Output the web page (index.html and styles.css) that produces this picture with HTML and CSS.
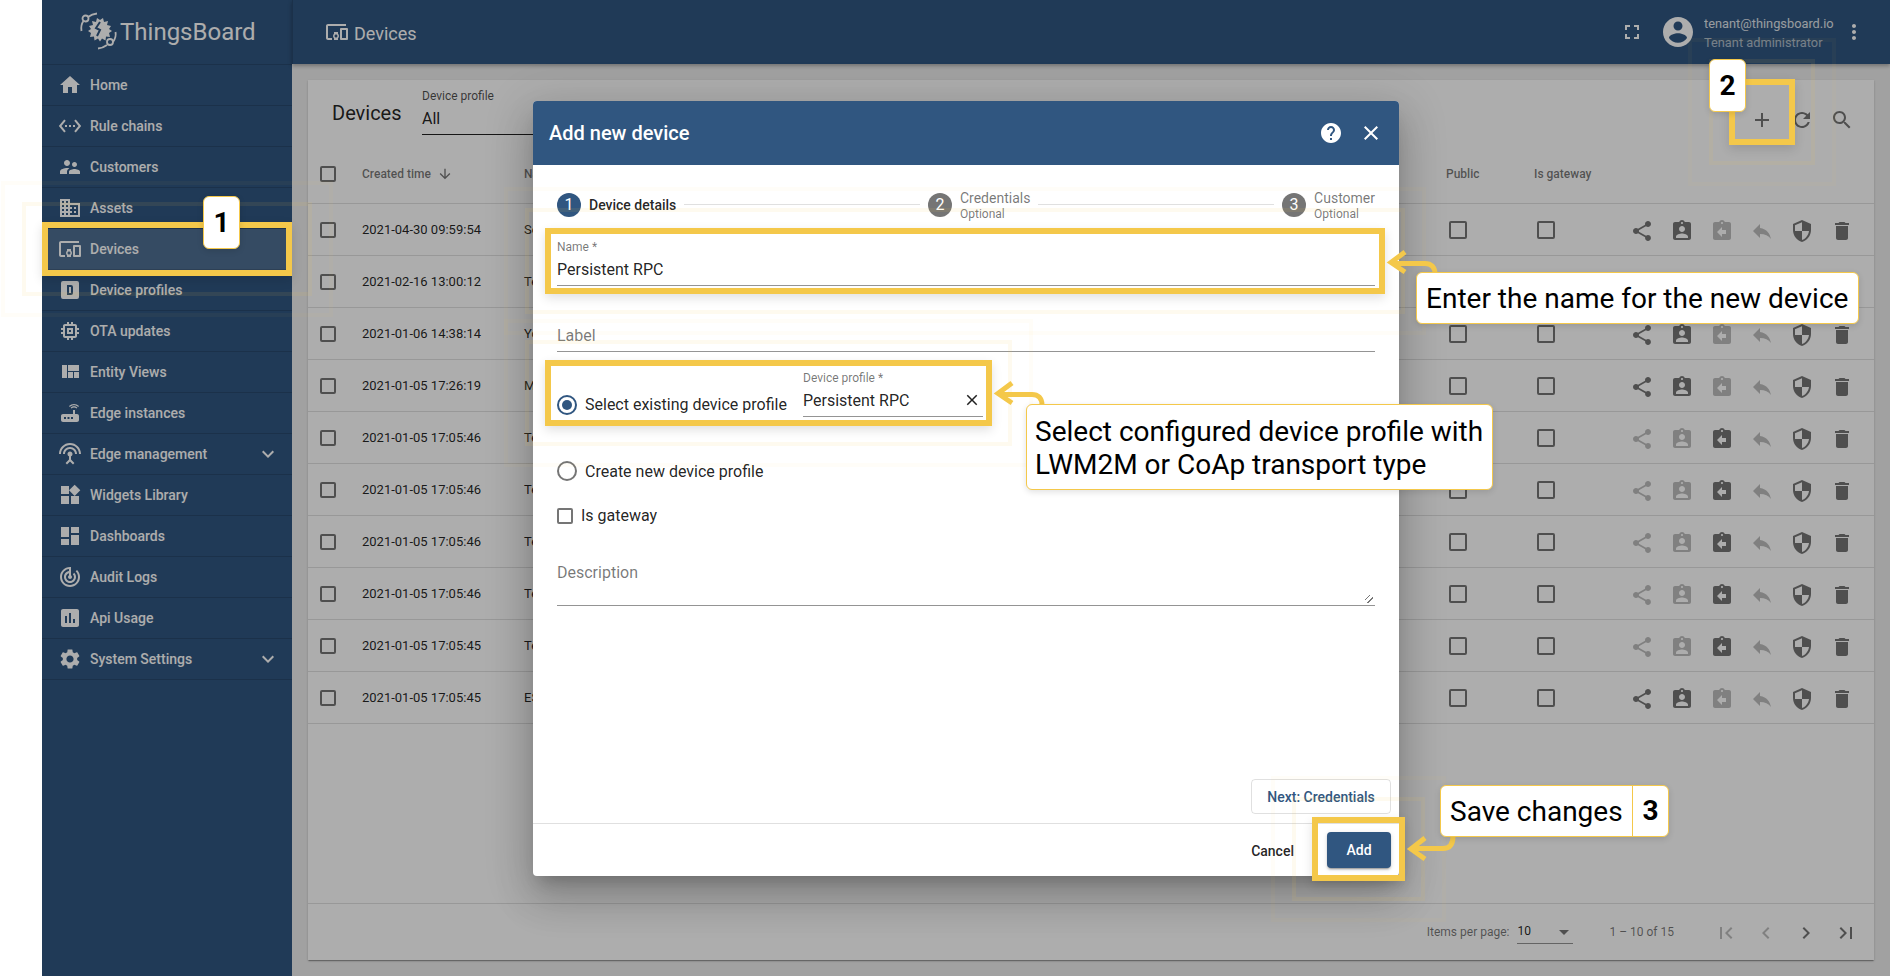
FILE: index.html
```html
<!DOCTYPE html>
<html lang="en">
<head>
<meta charset="utf-8">
<title>ThingsBoard | Devices</title>
<link rel="stylesheet" href="styles.css">
</head>
<body>
<svg class="defs" aria-hidden="true">
  <symbol id="home" viewBox="0 0 24 24"><path d="M10 20v-6h4v6h5v-8h3L12 3 2 12h3v8z"/></symbol>
  <symbol id="rule" viewBox="0 0 24 24"><path d="M7.77 6.76L6.23 5.48.82 12l5.41 6.52 1.54-1.28L3.42 12l4.35-5.24zM7 13h2v-2H7v2zm10-2h-2v2h2v-2zm-6 2h2v-2h-2v2zm6.77-7.52l-1.54 1.28L20.58 12l-4.35 5.24 1.54 1.28L23.18 12l-5.41-6.52z"/></symbol>
  <symbol id="customers" viewBox="0 0 24 24"><path d="M16.5 12c1.38 0 2.49-1.12 2.49-2.5S17.88 7 16.5 7C15.12 7 14 8.12 14 9.5s1.12 2.5 2.5 2.5zM9 11c1.66 0 2.99-1.34 2.99-3S10.66 5 9 5C7.34 5 6 6.34 6 8s1.34 3 3 3zm7.5 3c-1.83 0-5.5.92-5.5 2.75V19h11v-2.25c0-1.83-3.67-2.75-5.5-2.75zM9 13c-2.33 0-7 1.17-7 3.5V19h7v-2.25c0-.85.33-2.34 2.37-3.47C10.5 13.1 9.66 13 9 13z"/></symbol>
  <symbol id="assets" viewBox="0 0 24 24"><path d="M12 7V3H2v18h20V7H12zM6 19H4v-2h2v2zm0-4H4v-2h2v2zm0-4H4V9h2v2zm0-4H4V5h2v2zm4 12H8v-2h2v2zm0-4H8v-2h2v2zm0-4H8V9h2v2zm0-4H8V5h2v2zm10 12h-8v-2h2v-2h-2v-2h2v-2h-2V9h8v10zm-2-8h-2v2h2v-2zm0 4h-2v2h2v-2z"/></symbol>
  <symbol id="devices" viewBox="0 0 24 24"><path d="M3 6h18V4H3c-1.1 0-2 .9-2 2v12c0 1.1.9 2 2 2h4v-2H3V6zm10 6H9v1.78c-.61.55-1 1.33-1 2.22s.39 1.67 1 2.22V20h4v-1.78c.61-.55 1-1.34 1-2.22s-.39-1.67-1-2.22V12zm-2 5.5c-.83 0-1.5-.67-1.5-1.5s.67-1.5 1.5-1.5 1.5.67 1.5 1.5-.67 1.5-1.5 1.5zM22 8h-6c-.5 0-1 .5-1 1v10c0 .5.5 1 1 1h6c.5 0 1-.5 1-1V9c0-.5-.5-1-1-1zm-1 10h-4v-8h4v8z"/></symbol>
  <symbol id="profile" viewBox="0 0 24 24"><path fill-rule="evenodd" d="M5 3h14a2 2 0 0 1 2 2v14a2 2 0 0 1-2 2H5a2 2 0 0 1-2-2V5a2 2 0 0 1 2-2zm4 4v10h4a2 2 0 0 0 2-2V9a2 2 0 0 0-2-2H9zm2 2h2v6h-2V9z"/></symbol>
  <symbol id="memory" viewBox="0 0 24 24"><path d="M15 9H9v6h6V9zm-2 4h-2v-2h2v2zm8-2V9h-2V7c0-1.1-.9-2-2-2h-2V3h-2v2h-2V3H9v2H7c-1.1 0-2 .9-2 2v2H3v2h2v2H3v2h2v2c0 1.1.9 2 2 2h2v2h2v-2h2v2h2v-2h2c1.1 0 2-.9 2-2v-2h2v-2h-2v-2h2zm-4 6H7V7h10v10z"/></symbol>
  <symbol id="quilt" viewBox="0 0 24 24"><path d="M10 18h5v-6h-5v6zm-6 0h5V5H4v13zm12 0h5v-6h-5v6zM10 5v6h11V5H10z"/></symbol>
  <symbol id="router" viewBox="0 0 24 24"><path d="M20.2 5.9l.8-.8C19.6 3.7 17.8 3 16 3s-3.6.7-5 2.1l.8.8C13 4.8 14.5 4.2 16 4.2s3 .6 4.2 1.7zm-.9.8c-.9-.9-2.1-1.4-3.3-1.4s-2.4.5-3.3 1.4l.8.8c.7-.7 1.6-1 2.5-1 .9 0 1.8.3 2.5 1l.8-.8zM19 13h-2V9h-2v4H5c-1.1 0-2 .9-2 2v4c0 1.1.9 2 2 2h14c1.1 0 2-.9 2-2v-4c0-1.1-.9-2-2-2zM8 18H6v-2h2v2zm3.5 0h-2v-2h2v2zm3.5 0h-2v-2h2v2z"/></symbol>
  <symbol id="antenna" viewBox="0 0 24 24"><path d="M12 5c-3.87 0-7 3.13-7 7h2c0-2.76 2.24-5 5-5s5 2.24 5 5h2c0-3.87-3.13-7-7-7zm1 9.29c.88-.39 1.5-1.26 1.5-2.29 0-1.38-1.12-2.5-2.5-2.5S9.5 10.62 9.5 12c0 1.02.62 1.9 1.5 2.29v3.3L7.59 21 9 22.41l3-3 3 3L16.41 21 13 17.59v-3.3zM12 1C5.93 1 1 5.93 1 12h2c0-4.97 4.03-9 9-9s9 4.03 9 9h2c0-6.07-4.93-11-11-11z"/></symbol>
  <symbol id="widgets" viewBox="0 0 24 24"><path d="M13 13v8h8v-8h-8zM3 21h8v-8H3v8zM3 3v8h8V3H3zm13.66-1.31L11 7.34 16.66 13l5.66-5.66-5.66-5.65z"/></symbol>
  <symbol id="dash" viewBox="0 0 24 24"><path d="M3 13h8V3H3v10zm0 8h8v-6H3v6zm10 0h8V11h-8v10zm0-18v6h8V3h-8z"/></symbol>
  <symbol id="track" viewBox="0 0 24 24"><path d="M19.07 4.93l-1.41 1.41C19.1 7.79 20 9.79 20 12c0 4.42-3.58 8-8 8s-8-3.58-8-8c0-4.08 3.05-7.44 7-7.93v2.02C8.16 6.57 6 9.03 6 12c0 3.31 2.69 6 6 6s6-2.69 6-6c0-1.66-.67-3.16-1.76-4.24l-1.41 1.41C15.55 9.9 16 10.9 16 12c0 2.21-1.79 4-4 4s-4-1.79-4-4c0-1.86 1.28-3.41 3-3.86v2.14c-.6.35-1 .98-1 1.72 0 1.1.9 2 2 2s2-.9 2-2c0-.74-.4-1.38-1-1.72V2h-1C6.48 2 2 6.48 2 12s4.48 10 10 10 10-4.48 10-10c0-2.76-1.12-5.26-2.93-7.07z"/></symbol>
  <symbol id="chart" viewBox="0 0 24 24"><path d="M19 3H5c-1.1 0-2 .9-2 2v14c0 1.1.9 2 2 2h14c1.1 0 2-.9 2-2V5c0-1.1-.9-2-2-2zM9 17H7v-7h2v7zm4 0h-2V7h2v10zm4 0h-2v-4h2v4z"/></symbol>
  <symbol id="gear" viewBox="0 0 24 24"><path d="M19.14 12.94c.04-.3.06-.61.06-.94 0-.32-.02-.64-.07-.94l2.03-1.58c.18-.14.23-.41.12-.61l-1.92-3.32c-.12-.22-.37-.29-.59-.22l-2.39.96c-.5-.38-1.03-.7-1.62-.94l-.36-2.54c-.04-.24-.24-.41-.48-.41h-3.84c-.24 0-.43.17-.47.41l-.36 2.54c-.59.24-1.13.57-1.62.94l-2.39-.96c-.22-.08-.47 0-.59.22L2.74 8.87c-.12.21-.08.47.12.61l2.03 1.58c-.05.3-.09.63-.09.94s.02.64.07.94l-2.03 1.58c-.18.14-.23.41-.12.61l1.92 3.32c.12.22.37.29.59.22l2.39-.96c.5.38 1.03.7 1.62.94l.36 2.54c.05.24.24.41.48.41h3.84c.24 0 .44-.17.47-.41l.36-2.54c.59-.24 1.13-.56 1.62-.94l2.39.96c.22.08.47 0 .59-.22l1.92-3.32c.12-.22.07-.47-.12-.61l-2.01-1.58zM12 15.6c-1.98 0-3.6-1.62-3.6-3.6s1.62-3.6 3.6-3.6 3.6 1.62 3.6 3.6-1.62 3.6-3.6 3.6z"/></symbol>
  <symbol id="more" viewBox="0 0 24 24"><path d="M16.59 8.59L12 13.17 7.41 8.59 6 10l6 6 6-6z"/></symbol>
  <symbol id="full" viewBox="0 0 24 24"><path d="M7 14H5v5h5v-2H7v-3zm-2-4h2V7h3V5H5v5zm12 7h-3v2h5v-5h-2v3zM14 5v2h3v3h2V5h-5z"/></symbol>
  <symbol id="account" viewBox="0 0 24 24"><path d="M12 2C6.48 2 2 6.48 2 12s4.48 10 10 10 10-4.48 10-10S17.52 2 12 2zm0 3c1.66 0 3 1.34 3 3s-1.34 3-3 3-3-1.34-3-3 1.34-3 3-3zm0 14.2c-2.5 0-4.71-1.28-6-3.22.03-1.99 4-3.08 6-3.08 1.99 0 5.97 1.09 6 3.08-1.29 1.94-3.5 3.22-6 3.22z"/></symbol>
  <symbol id="vert" viewBox="0 0 24 24"><path d="M12 8c1.1 0 2-.9 2-2s-.9-2-2-2-2 .9-2 2 .9 2 2 2zm0 2c-1.1 0-2 .9-2 2s.9 2 2 2 2-.9 2-2-.9-2-2-2zm0 6c-1.1 0-2 .9-2 2s.9 2 2 2 2-.9 2-2-.9-2-2-2z"/></symbol>
  <symbol id="add" viewBox="0 0 24 24"><path d="M19 13h-6v6h-2v-6H5v-2h6V5h2v6h6v2z"/></symbol>
  <symbol id="refresh" viewBox="0 0 24 24"><path d="M17.65 6.35C16.2 4.9 14.21 4 12 4c-4.42 0-7.99 3.58-7.99 8s3.57 8 7.99 8c3.73 0 6.84-2.55 7.73-6h-2.08c-.82 2.33-3.04 4-5.65 4-3.31 0-6-2.69-6-6s2.69-6 6-6c1.66 0 3.14.69 4.22 1.78L13 11h7V4l-2.35 2.35z"/></symbol>
  <symbol id="search" viewBox="0 0 24 24"><path d="M15.5 14h-.79l-.28-.27C15.41 12.59 16 11.11 16 9.5 16 5.91 13.09 3 9.5 3S3 5.91 3 9.5 5.91 16 9.5 16c1.61 0 3.09-.59 4.23-1.57l.27.28v.79l5 4.99L20.49 19l-4.99-5zm-6 0C7.01 14 5 11.99 5 9.5S7.01 5 9.5 5 14 7.01 14 9.5 11.99 14 9.5 14z"/></symbol>
  <symbol id="share" viewBox="0 0 24 24"><path d="M18 16.08c-.76 0-1.44.3-1.96.77L8.91 12.7c.05-.23.09-.46.09-.7s-.04-.47-.09-.7l7.05-4.11c.54.5 1.25.81 2.04.81 1.66 0 3-1.34 3-3s-1.34-3-3-3-3 1.34-3 3c0 .24.04.47.09.7L8.04 9.81C7.5 9.31 6.79 9 6 9c-1.66 0-3 1.34-3 3s1.34 3 3 3c.79 0 1.5-.31 2.04-.81l7.12 4.16c-.05.21-.08.43-.08.65 0 1.61 1.31 2.92 2.92 2.92 1.61 0 2.92-1.31 2.92-2.92s-1.31-2.92-2.92-2.92z"/></symbol>
  <symbol id="assign" viewBox="0 0 24 24"><path d="M19 3h-4.18C14.4 1.84 13.3 1 12 1c-1.3 0-2.4.84-2.82 2H5c-1.1 0-2 .9-2 2v14c0 1.1.9 2 2 2h14c1.1 0 2-.9 2-2V5c0-1.1-.9-2-2-2zm-7 0c.55 0 1 .45 1 1s-.45 1-1 1-1-.45-1-1 .45-1 1-1zm0 4c1.66 0 3 1.34 3 3s-1.34 3-3 3-3-1.34-3-3 1.34-3 3-3zm6 12H6v-1.4c0-2 4-3.1 6-3.1s6 1.1 6 3.1V19z"/></symbol>
  <symbol id="unassign" viewBox="0 0 24 24"><path d="M19 3h-4.18C14.4 1.84 13.3 1 12 1c-1.3 0-2.4.84-2.82 2H5c-1.1 0-2 .9-2 2v14c0 1.1.9 2 2 2h14c1.1 0 2-.9 2-2V5c0-1.1-.9-2-2-2zm-7 0c.55 0 1 .45 1 1s-.45 1-1 1-1-.45-1-1 .45-1 1-1zm4 12h-4v3l-5-5 5-5v3h4v4z"/></symbol>
  <symbol id="reply" viewBox="0 0 24 24"><path d="M10 9V5l-7 7 7 7v-4.1c5 0 8.5 1.6 11 5.1-1-5-4-10-11-11z"/></symbol>
  <symbol id="shield" viewBox="0 0 24 24"><path d="M12 1L3 5v6c0 5.55 3.84 10.74 9 12 5.16-1.26 9-6.45 9-12V5l-9-4zm0 10.99h7c-.53 4.12-3.28 7.79-7 8.94V12H5V6.3l7-3.11v8.8z"/></symbol>
  <symbol id="trash" viewBox="0 0 24 24"><path d="M6 19c0 1.1.9 2 2 2h8c1.1 0 2-.9 2-2V7H6v12zM19 4h-3.5l-1-1h-5l-1 1H5v2h14V4z"/></symbol>
  <symbol id="help" viewBox="0 0 24 24"><path d="M12 2C6.48 2 2 6.48 2 12s4.48 10 10 10 10-4.48 10-10S17.52 2 12 2zm1 17h-2v-2h2v2zm2.07-7.75l-.9.92C13.45 12.9 13 13.5 13 15h-2v-.5c0-1.1.45-2.1 1.17-2.83l1.24-1.26c.37-.36.59-.86.59-1.41 0-1.1-.9-2-2-2s-2 .9-2 2H8c0-2.21 1.79-4 4-4s4 1.79 4 4c0 .88-.36 1.68-.93 2.25z"/></symbol>
  <symbol id="close" viewBox="0 0 24 24"><path d="M19 6.41L17.59 5 12 10.59 6.41 5 5 6.41 10.59 12 5 17.59 6.41 19 12 13.41 17.59 19 19 17.59 13.41 12z"/></symbol>
  <symbol id="down" viewBox="0 0 24 24"><path d="M20 12l-1.41-1.41L13 16.17V4h-2v12.17l-5.58-5.59L4 12l8 8 8-8z"/></symbol>
  <symbol id="first" viewBox="0 0 24 24"><path d="M18.41 16.59L13.82 12l4.59-4.59L17 6l-6 6 6 6zM6 6h2v12H6z"/></symbol>
  <symbol id="prev" viewBox="0 0 24 24"><path d="M15.41 7.41L14 6l-6 6 6 6 1.41-1.41L10.83 12z"/></symbol>
  <symbol id="next" viewBox="0 0 24 24"><path d="M10 6L8.59 7.41 13.17 12l-4.58 4.59L10 18l6-6z"/></symbol>
  <symbol id="last" viewBox="0 0 24 24"><path d="M5.59 7.41L10.18 12l-4.59 4.59L7 18l6-6-6-6zM16 6h2v12h-2z"/></symbol>
</svg>

<div class="app">
  <aside class="sidebar">
    <div class="brand">
      <svg class="logo" viewBox="0 0 38 38">
        <g class="logo-lines"><circle cx="5.500" cy="5.500" r="3"/><path d="M8 4Q12 1 17 .5M3.500 8Q.5 12 1.500 18"/><circle cx="30" cy="29" r="3"/><path d="M35.500 19Q36.500 24 33 29M27 32Q23 35 18 35.500"/></g>
        <g class="logo-core">
          <path class="logo-gear" d="M18 7l2 3 3-2 1 4 4-1-1 4 4 1-2 3 3 2-3 2 1 4-4-.5-.5 4-3.500-2-2 3-2-3-3.500 2-.5-4-4 .5 1-4-3-2 3-2-2-3 4-1-1-4 4 1 1-4 3 2z"/>
          <path class="logo-bolt" d="M20 12l-4 6 4 2-3 6"/>
        </g>
      </svg>
      <span class="brand-name">ThingsBoard</span>
    </div>
    <nav>
      <a class="nav-item"><svg class="ic"><use href="#home"/></svg><span>Home</span></a>
      <a class="nav-item"><svg class="ic"><use href="#rule"/></svg><span>Rule chains</span></a>
      <a class="nav-item"><svg class="ic"><use href="#customers"/></svg><span>Customers</span></a>
      <a class="nav-item"><svg class="ic"><use href="#assets"/></svg><span>Assets</span></a>
      <a class="nav-item active"><svg class="ic"><use href="#devices"/></svg><span>Devices</span></a>
      <a class="nav-item"><svg class="ic"><use href="#profile"/></svg><span>Device profiles</span></a>
      <a class="nav-item"><svg class="ic"><use href="#memory"/></svg><span>OTA updates</span></a>
      <a class="nav-item"><svg class="ic"><use href="#quilt"/></svg><span>Entity Views</span></a>
      <a class="nav-item"><svg class="ic"><use href="#router"/></svg><span>Edge instances</span></a>
      <a class="nav-item"><svg class="ic"><use href="#antenna"/></svg><span>Edge management</span><svg class="ic chev"><use href="#more"/></svg></a>
      <a class="nav-item"><svg class="ic"><use href="#widgets"/></svg><span>Widgets Library</span></a>
      <a class="nav-item"><svg class="ic"><use href="#dash"/></svg><span>Dashboards</span></a>
      <a class="nav-item"><svg class="ic"><use href="#track"/></svg><span>Audit Logs</span></a>
      <a class="nav-item"><svg class="ic"><use href="#chart"/></svg><span>Api Usage</span></a>
      <a class="nav-item"><svg class="ic"><use href="#gear"/></svg><span>System Settings</span><svg class="ic chev"><use href="#more"/></svg></a>
    </nav>
  </aside>
  <main class="main">
    <header class="toolbar">
      <svg class="ic"><use href="#devices"/></svg>
      <span class="crumb">Devices</span>
      <span class="grow"></span>
      <svg class="ic fs"><use href="#full"/></svg>
      <svg class="avatar"><use href="#account"/></svg>
      <div class="user"><div class="user-mail">tenant@thingsboard.io</div><div class="user-role">Tenant administrator</div></div>
      <svg class="ic vert"><use href="#vert"/></svg>
    </header>
    <div class="content">
      <section class="card">
        <div class="card-title">
          <h1>Devices</h1>
          <div class="filter"><div class="filter-label">Device profile</div><div class="filter-value">All</div></div>
          <span class="grow"></span>
          <span class="btn40"><svg class="ic"><use href="#add"/></svg></span>
          <span class="btn40"><svg class="ic"><use href="#refresh"/></svg></span>
          <span class="btn40"><svg class="ic"><use href="#search"/></svg></span>
        </div>
        <div class="row head">
          <span class="cb"></span>
          <span class="created">Created time <svg class="sort"><use href="#down"/></svg></span>
          <span>Name</span><span>Public</span><span>Is gateway</span><span></span>
        </div>
        <div class="row">
          <span class="cb"></span><span>2021-04-30 09:59:54</span><span>Sensor</span><span class="cb big"></span><span class="cb big"></span>
          <span class="acts"><svg class="ic"><use href="#share"/></svg><svg class="ic"><use href="#assign"/></svg><svg class="ic off"><use href="#unassign"/></svg><svg class="ic off"><use href="#reply"/></svg><svg class="ic"><use href="#shield"/></svg><svg class="ic"><use href="#trash"/></svg></span>
        </div>
        <div class="row">
          <span class="cb"></span><span>2021-02-16 13:00:12</span><span>Test</span><span class="cb big"></span><span class="cb big"></span>
          <span class="acts"><svg class="ic"><use href="#share"/></svg><svg class="ic"><use href="#assign"/></svg><svg class="ic off"><use href="#unassign"/></svg><svg class="ic off"><use href="#reply"/></svg><svg class="ic"><use href="#shield"/></svg><svg class="ic"><use href="#trash"/></svg></span>
        </div>
        <div class="row">
          <span class="cb"></span><span>2021-01-06 14:38:14</span><span>Your</span><span class="cb big"></span><span class="cb big"></span>
          <span class="acts"><svg class="ic"><use href="#share"/></svg><svg class="ic"><use href="#assign"/></svg><svg class="ic off"><use href="#unassign"/></svg><svg class="ic off"><use href="#reply"/></svg><svg class="ic"><use href="#shield"/></svg><svg class="ic"><use href="#trash"/></svg></span>
        </div>
        <div class="row">
          <span class="cb"></span><span>2021-01-05 17:26:19</span><span>My</span><span class="cb big"></span><span class="cb big"></span>
          <span class="acts"><svg class="ic"><use href="#share"/></svg><svg class="ic"><use href="#assign"/></svg><svg class="ic off"><use href="#unassign"/></svg><svg class="ic off"><use href="#reply"/></svg><svg class="ic"><use href="#shield"/></svg><svg class="ic"><use href="#trash"/></svg></span>
        </div>
        <div class="row">
          <span class="cb"></span><span>2021-01-05 17:05:46</span><span>Test</span><span class="cb big"></span><span class="cb big"></span>
          <span class="acts"><svg class="ic off"><use href="#share"/></svg><svg class="ic off"><use href="#assign"/></svg><svg class="ic"><use href="#unassign"/></svg><svg class="ic off"><use href="#reply"/></svg><svg class="ic"><use href="#shield"/></svg><svg class="ic"><use href="#trash"/></svg></span>
        </div>
        <div class="row">
          <span class="cb"></span><span>2021-01-05 17:05:46</span><span>Test</span><span class="cb big"></span><span class="cb big"></span>
          <span class="acts"><svg class="ic off"><use href="#share"/></svg><svg class="ic off"><use href="#assign"/></svg><svg class="ic"><use href="#unassign"/></svg><svg class="ic off"><use href="#reply"/></svg><svg class="ic"><use href="#shield"/></svg><svg class="ic"><use href="#trash"/></svg></span>
        </div>
        <div class="row">
          <span class="cb"></span><span>2021-01-05 17:05:46</span><span>Test</span><span class="cb big"></span><span class="cb big"></span>
          <span class="acts"><svg class="ic off"><use href="#share"/></svg><svg class="ic off"><use href="#assign"/></svg><svg class="ic"><use href="#unassign"/></svg><svg class="ic off"><use href="#reply"/></svg><svg class="ic"><use href="#shield"/></svg><svg class="ic"><use href="#trash"/></svg></span>
        </div>
        <div class="row">
          <span class="cb"></span><span>2021-01-05 17:05:46</span><span>Test</span><span class="cb big"></span><span class="cb big"></span>
          <span class="acts"><svg class="ic off"><use href="#share"/></svg><svg class="ic off"><use href="#assign"/></svg><svg class="ic"><use href="#unassign"/></svg><svg class="ic off"><use href="#reply"/></svg><svg class="ic"><use href="#shield"/></svg><svg class="ic"><use href="#trash"/></svg></span>
        </div>
        <div class="row">
          <span class="cb"></span><span>2021-01-05 17:05:45</span><span>Test</span><span class="cb big"></span><span class="cb big"></span>
          <span class="acts"><svg class="ic off"><use href="#share"/></svg><svg class="ic off"><use href="#assign"/></svg><svg class="ic"><use href="#unassign"/></svg><svg class="ic off"><use href="#reply"/></svg><svg class="ic"><use href="#shield"/></svg><svg class="ic"><use href="#trash"/></svg></span>
        </div>
        <div class="row">
          <span class="cb"></span><span>2021-01-05 17:05:45</span><span>ESP</span><span class="cb big"></span><span class="cb big"></span>
          <span class="acts"><svg class="ic"><use href="#share"/></svg><svg class="ic"><use href="#assign"/></svg><svg class="ic off"><use href="#unassign"/></svg><svg class="ic off"><use href="#reply"/></svg><svg class="ic"><use href="#shield"/></svg><svg class="ic"><use href="#trash"/></svg></span>
        </div>
        <span class="grow"></span>
        <footer class="pager">
          <span>Items per page:</span>
          <span class="page-size">10<i class="tri"></i></span>
          <span class="range">1 – 10 of 15</span>
          <span class="btn40 off"><svg class="ic"><use href="#first"/></svg></span>
          <span class="btn40 off"><svg class="ic"><use href="#prev"/></svg></span>
          <span class="btn40"><svg class="ic"><use href="#next"/></svg></span>
          <span class="btn40"><svg class="ic"><use href="#last"/></svg></span>
        </footer>
      </section>
    </div>
  </main>
</div>

<div class="scrim"></div>

<div class="dialog">
  <div class="dlg-head">
    <h2>Add new device</h2>
    <span class="grow"></span>
    <svg class="ic"><use href="#help"/></svg>
    <svg class="ic dlg-close"><use href="#close"/></svg>
  </div>
  <div class="dlg-body">
    <div class="stepper">
      <span class="dot on">1</span><span class="step-on">Device details</span><i class="step-line"></i>
      <span class="dot">2</span><span class="step-text">Credentials<small>Optional</small></span><i class="step-line"></i>
      <span class="dot">3</span><span class="step-text">Customer<small>Optional</small></span>
    </div>
    <div class="field"><div class="flabel">Name *</div><div class="fvalue">Persistent RPC</div></div>
    <div class="field gap17"><div class="flabel"></div><div class="fvalue hint">Label</div></div>
    <div class="choice">
      <span class="radio on"></span><span class="choice-text">Select existing device profile</span>
      <div class="field profile"><div class="flabel">Device profile *</div><div class="fvalue">Persistent RPC<svg class="clear"><use href="#close"/></svg></div></div>
    </div>
    <div class="choice2"><span class="radio"></span><span class="choice-text">Create new device profile</span></div>
    <div class="gateway"><span class="cb dlg"></span><span class="choice-text">Is gateway</span></div>
    <div class="field desc"><div class="flabel"></div><div class="fvalue hint">Description</div><i class="grip"></i></div>
    <div class="next-row"><span class="next-btn">Next: Credentials</span></div>
  </div>
  <div class="dlg-foot"><span class="cancel">Cancel</span><span class="add-btn">Add</span></div>
</div>

<div class="hl hl-devices"></div><div class="ring r1 hl-devices"></div><div class="ring r2 hl-devices"></div>
<div class="hl hl-plus"></div><div class="ring r1 hl-plus"></div><div class="ring r2 hl-plus"></div>
<div class="hl hl-name"></div><div class="ring r1 hl-name"></div><div class="ring r2 hl-name"></div>
<div class="hl hl-profile"></div><div class="ring r1 hl-profile"></div><div class="ring r2 hl-profile"></div>
<div class="hl hl-add"></div><div class="ring r1 hl-add"></div><div class="ring r2 hl-add"></div>

<svg class="arrows" viewBox="0 0 1890 976">
  <path d="M1435 274C1435 267 1431 263.500 1425 263.500H1392"/><path d="M1405 252L1391 262.500L1405 272"/>
  <path d="M1042 405C1042 398 1038 394.500 1032 394.500H999"/><path d="M1012 383L998 393.500L1012 403"/>
  <path d="M1453 836C1453 845 1449 848.500 1443 848.500H1412"/><path d="M1425 838L1411 849L1425 859"/>
</svg>

<div class="tip num t1">1</div>
<div class="tip num t2">2</div>
<div class="tip t-name">Enter the name for the new device</div>
<div class="tip t-select">Select configured device profile with<br>LWM2M or CoAp transport type</div>
<div class="tip t-save"><span class="save-text">Save changes</span><span class="save-num">3</span></div>
</body>
</html>
```

FILE: styles.css
```css
* { box-sizing: border-box; }
html, body { margin: 0; height: 100%; }
body { position: relative; width: 1890px; height: 976px; overflow: hidden; background: #fff; font-family: Roboto, "Liberation Sans", sans-serif; color: rgba(0,0,0,.87); }
.defs { position: absolute; width: 0; height: 0; }
.grow { flex: 1; }
.ic { width: 24px; height: 24px; fill: currentColor; flex: none; display: block; }

.app { display: flex; height: 976px; padding-left: 42px; }
.sidebar { width: 250px; flex: none; background: #305680; color: #fff; }
.brand { height: 65px; display: flex; align-items: center; padding-left: 38px; border-bottom: 1px solid rgba(0,0,0,.14); }
.logo { width: 38px; height: 38px; flex: none; overflow: visible; }
.logo-lines { fill: none; stroke: #fff; stroke-width: 1.800; }
.logo-core { transform: translateY(-3px); }
.logo-gear { fill: #fff; }
.logo-bolt { fill: none; stroke: #305680; stroke-width: 2; }
.brand-name { font-size: 24px; margin-left: 2px; }
.nav-item { height: 41px; display: flex; align-items: center; padding: 0 12px 0 16px; border-bottom: 1px solid rgba(0,0,0,.14); font-size: 14px; font-weight: 500; gap: 8px; }
.nav-item.active { background: rgba(255,255,255,.15); }
.chev { margin-left: auto; }

.main { flex: 1; min-width: 0; display: flex; flex-direction: column; background: #eee; }
.toolbar { height: 64px; flex: none; display: flex; align-items: center; background: #305680; color: #fff; padding-left: 32px; border-left: 1px solid rgba(0,0,0,.14); box-shadow: 0 2px 4px rgba(0,0,0,.3); position: relative; }
.crumb { font-size: 18px; margin-left: 5px; padding-top: 2px; }
.fs { margin-right: 16px; }
.avatar { width: 36px; height: 36px; fill: currentColor; margin-right: 8px; }
.user { width: 138px; padding-top: 1px; }
.user-mail { font-size: 12.800px; line-height: 19px; opacity: .85; }
.user-role { font-size: 12.800px; line-height: 19px; opacity: .6; }
.vert { margin: 0 24px 0 0; }
.content { flex: 1; padding: 16px; min-height: 0; }
.card { height: 880px; background: #fff; box-shadow: 0 2px 1px -1px rgba(0,0,0,.2), 0 1px 1px rgba(0,0,0,.14), 0 1px 3px rgba(0,0,0,.12); display: flex; flex-direction: column; }
.card-title { height: 64px; flex: none; display: flex; align-items: flex-start; padding: 0 12px 0 24px; }
.card-title h1 { margin: 0; font-size: 20px; font-weight: 400; line-height: 66px; width: 90px; }
.filter { width: 320px; margin-top: 8px; border-bottom: 1px solid rgba(0,0,0,.87); height: 47px; }
.filter-label { font-size: 12px; line-height: 16px; color: rgba(0,0,0,.7); }
.filter-value { font-size: 16px; line-height: 24px; margin-top: 3px; }
.btn40 { width: 40px; height: 40px; display: flex; align-items: center; justify-content: center; color: rgba(0,0,0,.54); margin-top: 20px; }
.pager .btn40 { margin-top: 1px; }
.pager .btn40.off { color: rgba(0,0,0,.26); }

.row { height: 52px; flex: none; display: grid; grid-template-columns: 54px 162px 922px 88px 88px 252px; align-items: center; border-bottom: 1px solid rgba(0,0,0,.12); font-size: 13px; }
.row > :first-child { margin-left: 12px; }
.row.head { height: 60px; font-size: 12px; font-weight: 500; color: rgba(0,0,0,.54); }
.created { display: flex; align-items: center; gap: 6px; }
.sort { width: 16px; height: 16px; fill: currentColor; }
.cb { display: block; width: 16px; height: 16px; border: 2px solid rgba(0,0,0,.54); border-radius: 2px; }
.cb.big { width: 18px; height: 18px; margin-left: 3px; }
.acts { display: flex; padding: 2px 12px 0 8px; color: rgba(0,0,0,.54); }
.acts .ic { margin-right: 16px; }
.off { color: rgba(0,0,0,.26); }
.pager { height: 57px; flex: none; border-top: 1px solid rgba(0,0,0,.12); display: flex; align-items: center; justify-content: flex-end; padding-right: 8px; font-size: 12px; color: rgba(0,0,0,.54); }
.page-size { width: 56px; margin-left: 8px; height: 24px; line-height: 23px; border-bottom: 1px solid rgba(0,0,0,.42); color: rgba(0,0,0,.87); position: relative; }
.tri { position: absolute; right: 4px; top: 10px; border: 5px solid transparent; border-top-color: rgba(0,0,0,.54); border-bottom: 0; }
.range { margin: 0 32px 0 36px; }

.scrim { position: absolute; left: 42px; right: 0; top: 0; bottom: 0; background: rgba(0,0,0,.32); }
.dialog { position: absolute; left: 533px; top: 101px; width: 866px; height: 775px; background: #fff; border-radius: 4px; box-shadow: 0 11px 15px -7px rgba(0,0,0,.2), 0 24px 38px 3px rgba(0,0,0,.14), 0 9px 46px 8px rgba(0,0,0,.12); display: flex; flex-direction: column; overflow: hidden; }
.dlg-head { height: 64px; flex: none; background: #305680; color: #fff; display: flex; align-items: center; padding: 0 16px; }
.dlg-head h2 { margin: 0; font-size: 20px; font-weight: 500; }
.dlg-close { margin-left: 16px; }
.dlg-body { flex: 1; display: flex; flex-direction: column; padding: 0 24px; min-height: 0; }
.stepper { flex: none; height: 72px; padding-top: 28px; display: flex; align-items: flex-start; }
.dot { width: 24px; height: 24px; border-radius: 50%; background: #757575; color: #fff; font-size: 16px; line-height: 24px; text-align: center; flex: none; }
.dot.on { background: #305680; }
.step-on { font-size: 14px; font-weight: 500; line-height: 24px; margin-left: 8px; }
.step-text { font-size: 14px; line-height: 14px; margin-left: 8px; color: rgba(0,0,0,.54); margin-top: -2px; }
.step-text small { display: block; font-size: 12px; line-height: 14px; margin-top: 2px; }
.step-line { flex: 1; height: 1px; background: rgba(0,0,0,.12); margin: 11px 8px 0; }
.field { flex: none; height: 49px; border-bottom: 1px solid rgba(0,0,0,.42); }
.flabel { height: 20px; font-size: 12px; line-height: 20px; color: rgba(0,0,0,.54); }
.fvalue { font-size: 16px; line-height: 26px; position: relative; }
.hint { color: rgba(0,0,0,.54); }
.gap17 { margin-top: 17px; }
.choice { margin-top: 16px; height: 49px; display: flex; align-items: flex-end; position: relative; }
.radio { width: 20px; height: 20px; border-radius: 50%; border: 2px solid rgba(0,0,0,.54); flex: none; position: relative; margin-bottom: 2px; }
.radio.on { border-color: #305680; }
.radio.on::after { content: ""; position: absolute; left: 3px; top: 3px; width: 10px; height: 10px; border-radius: 50%; background: #305680; }
.choice-text { font-size: 16px; height: 24px; line-height: 26px; margin-left: 8px; }
.choice > .choice-text { margin-bottom: 1px; }
.profile { width: 180px; margin-left: auto; margin-right: 392px; }
.clear { position: absolute; right: 2px; top: 3px; width: 18px; height: 18px; fill: rgba(0,0,0,.87); }
.choice2 { margin-top: 42px; height: 24px; display: flex; align-items: center; }
.choice2 .radio { margin-bottom: 0; }
.gateway { margin-top: 20px; height: 24px; display: flex; align-items: center; }
.cb.dlg { flex: none; margin-top: 1px; }
.gateway .choice-text { margin-left: 8px; }
.desc { margin-top: 12px; height: 67px; position: relative; }
.desc .fvalue { line-height: 28px; }
.grip { position: absolute; right: 2px; bottom: 2px; width: 8px; height: 8px; background: repeating-linear-gradient(135deg, transparent 0 3px, #777 3px 4px); }
.next-row { margin-top: auto; padding-bottom: 9px; display: flex; justify-content: flex-end; margin-right: -16px; }
.next-btn { width: 140px; height: 35px; border: 1px solid rgba(0,0,0,.12); border-radius: 4px; color: #305680; font-size: 14px; font-weight: 500; line-height: 35px; text-align: center; }
.dlg-foot { height: 53px; flex: none; border-top: 1px solid rgba(0,0,0,.12); display: flex; align-items: center; justify-content: flex-end; padding-right: 8px; font-size: 14px; font-weight: 500; }
.cancel { margin-right: 33px; padding-top: 1px; }
.add-btn { width: 64px; height: 36px; background: #305680; color: #fff; border-radius: 4px; text-align: center; line-height: 36px; box-shadow: 0 3px 1px -2px rgba(0,0,0,.2), 0 2px 2px rgba(0,0,0,.14), 0 1px 5px rgba(0,0,0,.12); }

.hl { position: absolute; border: 6px solid #f4c84a; box-shadow: 0 4px 10px rgba(0,0,0,.12); }
.ring { position: absolute; border: 4px solid rgba(244,200,74,.09); }
.hl-devices { left: 42px; top: 222px; width: 250px; height: 54px; }
.hl-plus { left: 1729px; top: 79px; width: 66px; height: 66px; }
.hl-name { left: 545px; top: 228px; width: 840px; height: 66px; }
.hl-profile { left: 545px; top: 360px; width: 447px; height: 66px; }
.hl-add { left: 1312px; top: 817px; width: 93px; height: 64px; }
.ring.r1 { margin: -20px; box-sizing: content-box; padding: 16px; }
.ring.r2 { margin: -41px; box-sizing: content-box; padding: 37px; border-color: rgba(244,200,74,.04); }

.arrows { position: absolute; left: 0; top: 0; width: 1890px; height: 976px; fill: none; stroke: #f4c84a; stroke-width: 5; }
.tip { position: absolute; background: #fff; border: 1px solid #f4c84a; border-radius: 6px; color: #000; font-size: 28px; line-height: 33px; box-shadow: 0 2px 6px rgba(0,0,0,.12); }
.num { width: 37px; height: 53px; display: flex; align-items: center; justify-content: center; font-weight: 700; }
.t1 { left: 203px; top: 196px; }
.t2 { left: 1709px; top: 59px; }
.t-name { left: 1416px; top: 272px; width: 443px; height: 52px; padding: 9px; white-space: nowrap; }
.t-select { left: 1026px; top: 404px; width: 467px; height: 86px; padding: 10px 8px; white-space: nowrap; }
.t-save { left: 1440px; top: 785px; width: 229px; height: 52px; display: flex; align-items: center; padding-left: 9px; }
.save-text { flex: 1; white-space: nowrap; padding-top: 1px; }
.save-num { width: 36px; height: 100%; border-left: 1px solid #f4c84a; font-weight: 700; text-align: center; line-height: 50px; }
```
